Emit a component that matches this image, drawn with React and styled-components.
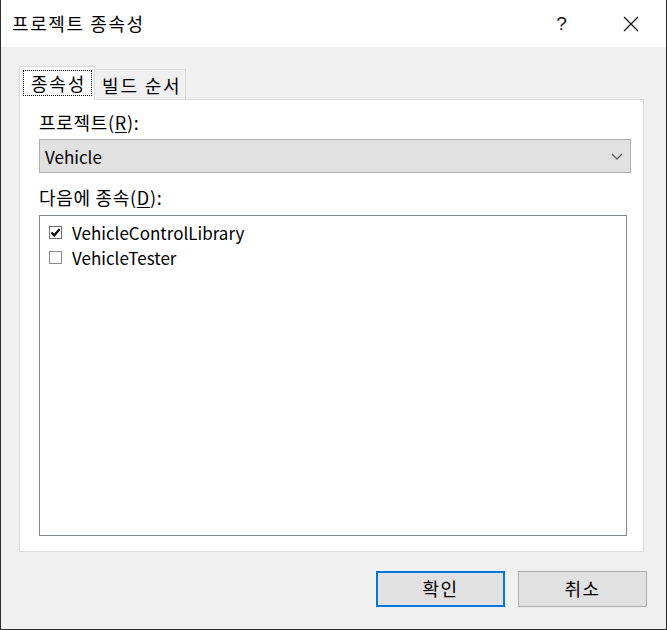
import React, { useState } from "react";
import styled, { createGlobalStyle } from "styled-components";

const Global = createGlobalStyle`
  html, body { margin: 0; padding: 0; background: #fff; }
  * { box-sizing: border-box; }
`;

const FONT = `"Noto Sans CJK KR", "Noto Sans", sans-serif`;

const Window = styled.div`
  width: 667px;
  height: 630px;
  display: flex;
  flex-direction: column;
  border: 1px solid #2e2e2e;
  border-top: none;
  font-family: ${FONT};
  color: #000;
`;

const TitleBar = styled.div`
  height: 47px;
  flex: none;
  background: #fff;
  display: flex;
  align-items: center;
  padding-left: 11px;
`;

const Title = styled.div`
  flex: 1;
  font-size: 18px;
  letter-spacing: 1.6px;
  line-height: 24px;
  margin-top: -1px;
`;

const CaptionButton = styled.div`
  width: ${(p) => p.$w}px;
  height: 47px;
  display: flex;
  align-items: center;
  justify-content: center;
  font-family: "Liberation Sans", sans-serif;
  font-size: 19px;
  color: #111;
`;

const Body = styled.div`
  flex: 1;
  background: #f0f0f0;
  display: flex;
  flex-direction: column;
  padding-top: 20px;
`;

const TabArea = styled.div`
  margin: 0 22px 0 18px;
  display: flex;
  flex-direction: column;
`;

const TabRow = styled.div`
  display: flex;
  align-items: flex-end;
  height: 33px;
  margin-bottom: -1px;
`;

const Tab = styled.div`
  position: relative;
  z-index: ${(p) => (p.$active ? 2 : 1)};
  height: ${(p) => (p.$active ? 34 : 31)}px;
  padding: ${(p) => (p.$active ? "3px 2px 4px 3px" : "0 4px 0 7px")};
  background: ${(p) => (p.$active ? "#fff" : "#f0f0f0")};
  border: 1px solid #d9d9d9;
  border-bottom: ${(p) => (p.$active ? "none" : "1px solid #d9d9d9")};
  border-left: ${(p) => (p.$active ? "1px solid #d9d9d9" : "none")};
  font-size: 18px;
  letter-spacing: 1.8px;
  display: flex;
  align-items: ${(p) => (p.$active ? "stretch" : "center")};
`;

const FocusRect = styled.div`
  border: 1px dotted #000;
  padding: 0 5px 0 7px;
  display: flex;
  align-items: center;
  line-height: 20px;
`;

const Panel = styled.div`
  height: 453px;
  background: #fff;
  border: 1px solid #d9d9d9;
  padding: 11px 0 0 19px;
  display: flex;
  flex-direction: column;
`;

const Label = styled.div`
  font-size: 18px;
  letter-spacing: 0.7px;
  line-height: 22px;
  margin-top: ${(p) => p.$mt}px;
  & u { text-underline-offset: 2px; }
`;

const Select = styled.div`
  width: 592px;
  height: 34px;
  margin-top: 6px;
  background: #e1e1e1;
  border: 1px solid #adadad;
  display: flex;
  align-items: center;
  justify-content: space-between;
  padding: 0 7px 0 5px;
  font-size: 17px;
`;

const ListBox = styled.div`
  width: 588px;
  height: 321px;
  margin-top: 7px;
  border: 1px solid #828790;
  background: #fff;
  padding-top: 4px;
  display: flex;
  flex-direction: column;
`;

const Row = styled.div`
  height: 25px;
  display: flex;
  align-items: center;
  padding-left: 9px;
  font-size: 17px;
  gap: 10px;
`;

const Box = styled.div`
  width: 13px;
  height: 13px;
  border: 1px solid ${(p) => (p.$checked ? "#6e6e6e" : "#8c8c8c")};
  background: #fff;
  display: flex;
  align-items: center;
  justify-content: center;
  flex: none;
`;

const Footer = styled.div`
  display: flex;
  justify-content: flex-end;
  gap: 13px;
  padding: 19px 19px 0 0;
`;

const Button = styled.div`
  width: 129px;
  height: 36px;
  background: #e1e1e1;
  border: ${(p) => (p.$default ? "2px solid #0078d7" : "1px solid #adadad")};
  display: flex;
  align-items: center;
  justify-content: center;
  font-size: 18px;
  letter-spacing: 1.5px;
  padding-bottom: 2px;
`;

const Check = () => (
  <svg width="11" height="11" viewBox="0 0 11 11">
    <path d="M1.5 5.5 L4.2 8.3 L9.6 2.2" fill="none" stroke="#000" strokeWidth="2.2" />
  </svg>
);

const items = [
  { name: "VehicleControlLibrary", checked: true },
  { name: "VehicleTester", checked: false },
];

export default function App() {
  const [state] = useState(items);
  return (
    <>
      <Global />
      <Window>
        <TitleBar>
          <Title>프로젝트 종속성</Title>
          <CaptionButton $w={69}>?</CaptionButton>
          <CaptionButton $w={70}>
            <svg width="16" height="16" viewBox="0 0 16 16">
              <path d="M1 1 L15 15 M15 1 L1 15" stroke="#111" strokeWidth="1.2" />
            </svg>
          </CaptionButton>
        </TitleBar>
        <Body>
          <TabArea>
            <TabRow>
              <Tab $active>
                <FocusRect>종속성</FocusRect>
              </Tab>
              <Tab>빌드 순서</Tab>
            </TabRow>
            <Panel>
              <Label $mt={0}>
                프로젝트(<u>R</u>):
              </Label>
              <Select>
                <span>Vehicle</span>
                <svg width="12" height="7" viewBox="0 0 12 7">
                  <path d="M1 1 L6 6 L11 1" fill="none" stroke="#606060" strokeWidth="1.3" />
                </svg>
              </Select>
              <Label $mt={13}>
                다음에 종속(<u>D</u>):
              </Label>
              <ListBox>
                {state.map((it) => (
                  <Row key={it.name}>
                    <Box $checked={it.checked}>{it.checked && <Check />}</Box>
                    <span>{it.name}</span>
                  </Row>
                ))}
              </ListBox>
            </Panel>
          </TabArea>
          <Footer>
            <Button $default>확인</Button>
            <Button>취소</Button>
          </Footer>
        </Body>
      </Window>
    </>
  );
}
